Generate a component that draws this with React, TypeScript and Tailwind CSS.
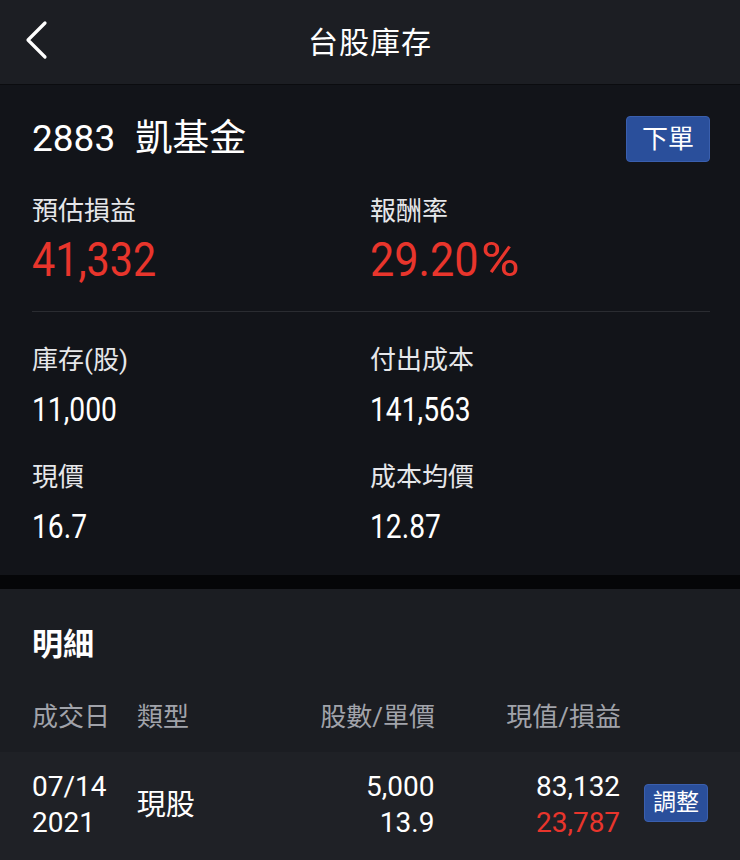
const font = { fontFamily: 'Roboto, "Noto Sans CJK TC", sans-serif' }

function Stat({ label, value, red, pct }: { label: string; value: string; red?: boolean; pct?: boolean }) {
  return (
    <div className="flex flex-col">
      <span className="text-[26px] leading-[30px] text-[#e6e7ea]">{label}</span>
      {red ? (
        <span className="mt-[10px] text-[48px] leading-[48px] text-[#e8352c] whitespace-nowrap">
          {pct ? (
            <>
              <span className="inline-block origin-left scale-x-[0.9] mr-[-12px]">{value}</span>
              <span className="inline-block origin-left scale-x-[1.1] ml-[2px]">%</span>
            </>
          ) : (
            <span className="inline-block origin-left scale-x-[0.86]">{value}</span>
          )}
        </span>
      ) : (
        <span className="mt-[16px] text-[34px] leading-[36px] text-white">
          <span className="inline-block origin-left scale-x-[0.83]">{value}</span>
        </span>
      )}
    </div>
  )
}

export default function App() {
  return (
    <div className="w-[740px] h-[860px] overflow-hidden bg-[#1b1d22]" style={font}>
      {/* Header */}
      <div className="relative h-[85px] bg-[#1c1e23] border-b border-[#0b0c0f] flex items-center justify-center">
        <svg
          className="absolute left-[24px] top-[19px]"
          width="26"
          height="42"
          viewBox="0 0 26 42"
          fill="none"
          stroke="white"
          strokeWidth="3.2"
          strokeLinecap="round"
          strokeLinejoin="round"
        >
          <path d="M21 4 L4 21 L21 38" />
        </svg>
        <h1 className="text-[30px] text-white tracking-[1px]">台股庫存</h1>
      </div>

      {/* Summary card */}
      <div className="bg-[#121419] h-[490px] px-[32px] pt-[31px]">
        <div className="flex items-center justify-between h-[46px]">
          <h2 className="text-[37px] leading-[44px] text-white">
            <span className="mr-[20px]">2883</span>凱基金
          </h2>
          <button className="mr-[-2px] w-[84px] h-[46px] rounded-[4px] bg-[#2a4f9b] border border-[#3a5fae] text-[26px] text-white">
            下單
          </button>
        </div>
        <div className="grid grid-cols-2 mt-[34px]">
          <Stat label="預估損益" value="41,332" red />
          <Stat label="報酬率" value="29.20" red pct />
        </div>
        <div className="h-px bg-[#2a2c31] mt-[27px] mr-[-2px]" />
        <div className="grid grid-cols-2 mt-[33px] gap-y-[35px]">
          <Stat label="庫存(股)" value="11,000" />
          <Stat label="付出成本" value="141,563" />
          <Stat label="現價" value="16.7" />
          <Stat label="成本均價" value="12.87" />
        </div>
      </div>

      <div className="h-[14px] bg-[#050608]" />

      {/* Detail */}
      <div className="bg-[#1b1d22]">
        <h3 className="px-[32px] pt-[36px] text-[31px] leading-[40px] font-bold text-white">明細</h3>
        <div className="flex items-center px-[32px] mt-[26px] h-[52px] text-[26px] text-[#a1a3aa]">
          <span className="w-[105px]">成交日</span>
          <span className="w-[100px]">類型</span>
          <span className="w-[198px] text-right">股數/單價</span>
          <span className="w-[186px] text-right">現值/損益</span>
        </div>
        <div className="mt-[9px] bg-[#1f2126] h-[120px] flex items-start px-[32px] pt-[17px]">
          <div className="w-[105px] text-[28px] leading-[36px] text-white">
            <div>07/14</div>
            <div>2021</div>
          </div>
          <div className="w-[100px] text-[29px] leading-[72px] text-white">現股</div>
          <div className="w-[198px] text-right text-[28px] leading-[36px] text-white">
            <div>5,000</div>
            <div>13.9</div>
          </div>
          <div className="w-[186px] text-right text-[28px] leading-[36px]">
            <div className="text-white">83,132</div>
            <div className="text-[#e8352c]">23,787</div>
          </div>
          <button className="ml-[24px] mt-[15px] w-[64px] h-[38px] rounded-[4px] bg-[#2a4f9b] border border-[#3a5fae] text-[23px] text-white">
            調整
          </button>
        </div>
      </div>
    </div>
  )
}
